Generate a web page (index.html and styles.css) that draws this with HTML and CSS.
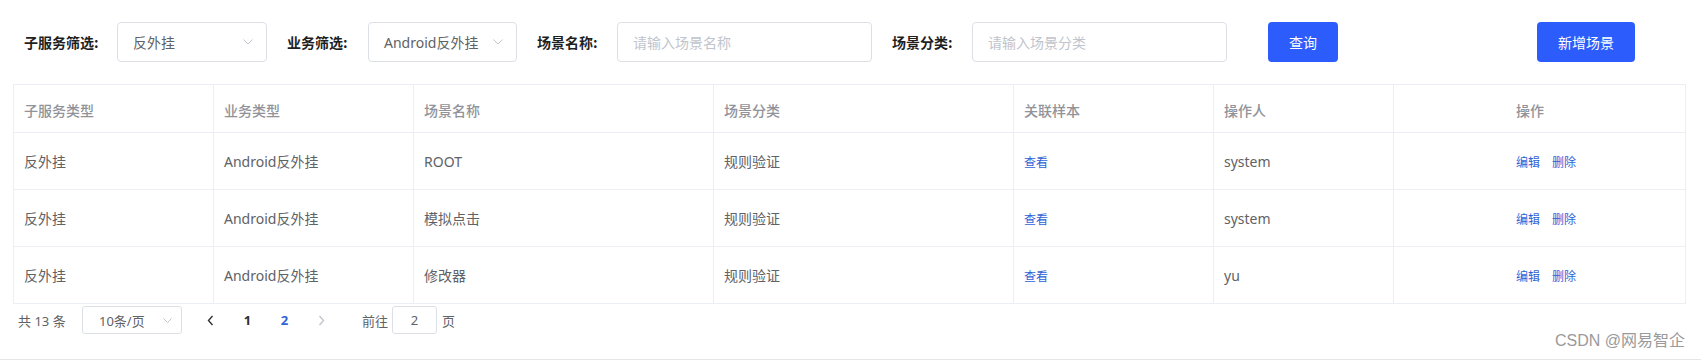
FILE: index.html
```html
<!DOCTYPE html>
<html lang="zh-CN">

<head>
  <meta charset="utf-8">
  <meta name="viewport" content="width=device-width, initial-scale=1">
  <title>场景管理</title>
  <link rel="stylesheet" href="styles.css">
</head>

<body>
  <div class="page">
    <!-- 筛选条件 -->
    <div class="filter">
      <div class="filter-item">
        <label class="filter-label label-sub">子服务筛选:</label>
        <div class="select select-sub">
          <span>反外挂</span>
          <svg class="arrow" width="10" height="6" viewBox="0 0 10 6"><polyline points="0.5,0.5 5,5 9.5,0.5" fill="none" stroke="#c0c4cc" stroke-width="1"/></svg>
        </div>
      </div>
      <div class="filter-item">
        <label class="filter-label label-biz">业务筛选:</label>
        <div class="select select-biz">
          <span>Android反外挂</span>
          <svg class="arrow" width="10" height="6" viewBox="0 0 10 6"><polyline points="0.5,0.5 5,5 9.5,0.5" fill="none" stroke="#c0c4cc" stroke-width="1"/></svg>
        </div>
      </div>
      <div class="filter-item">
        <label class="filter-label">场景名称:</label>
        <input class="input" type="text" placeholder="请输入场景名称">
      </div>
      <div class="filter-item">
        <label class="filter-label">场景分类:</label>
        <input class="input" type="text" placeholder="请输入场景分类">
      </div>
      <button class="btn btn-query">查询</button>
      <button class="btn btn-add">新增场景</button>
    </div>

    <!-- 场景列表 -->
    <table class="table">
      <colgroup>
        <col style="width: 200px">
        <col style="width: 200px">
        <col style="width: 300px">
        <col style="width: 300px">
        <col style="width: 200px">
        <col style="width: 180px">
        <col style="width: 292px">
      </colgroup>
      <thead>
        <tr>
          <th>子服务类型</th>
          <th>业务类型</th>
          <th>场景名称</th>
          <th>场景分类</th>
          <th>关联样本</th>
          <th>操作人</th>
          <th class="col-op">操作</th>
        </tr>
      </thead>
      <tbody>
        <tr>
          <td>反外挂</td>
          <td>Android反外挂</td>
          <td>ROOT</td>
          <td>规则验证</td>
          <td><a class="link" href="javascript:;">查看</a></td>
          <td>system</td>
          <td class="col-op"><a class="link" href="javascript:;">编辑</a><a class="link" href="javascript:;">删除</a></td>
        </tr>
        <tr>
          <td>反外挂</td>
          <td>Android反外挂</td>
          <td>模拟点击</td>
          <td>规则验证</td>
          <td><a class="link" href="javascript:;">查看</a></td>
          <td>system</td>
          <td class="col-op"><a class="link" href="javascript:;">编辑</a><a class="link" href="javascript:;">删除</a></td>
        </tr>
        <tr>
          <td>反外挂</td>
          <td>Android反外挂</td>
          <td>修改器</td>
          <td>规则验证</td>
          <td><a class="link" href="javascript:;">查看</a></td>
          <td>yu</td>
          <td class="col-op"><a class="link" href="javascript:;">编辑</a><a class="link" href="javascript:;">删除</a></td>
        </tr>
      </tbody>
    </table>

    <!-- 分页 -->
    <div class="pager">
      <span class="pager-total">共 13 条</span>
      <div class="pager-size">
        <span>10条/页</span>
        <svg class="arrow" width="9" height="5" viewBox="0 0 9 5"><polyline points="0.5,0.5 4.5,4.5 8.5,0.5" fill="none" stroke="#c0c4cc" stroke-width="1"/></svg>
      </div>
      <ul class="pager-list">
        <li class="pager-btn">
          <svg width="7" height="11" viewBox="0 0 7 11"><polyline points="5.5,1 1.5,5.5 5.5,10" fill="none" stroke="#303133" stroke-width="1.4"/></svg>
        </li>
        <li class="pager-num">1</li>
        <li class="pager-num active">2</li>
        <li class="pager-btn">
          <svg width="7" height="11" viewBox="0 0 7 11"><polyline points="1.5,1 5.5,5.5 1.5,10" fill="none" stroke="#c0c4cc" stroke-width="1.4"/></svg>
        </li>
      </ul>
      <div class="pager-jump">
        <span>前往</span>
        <div class="pager-input">2</div>
        <span>页</span>
      </div>
    </div>

    <div class="watermark">CSDN @网易智企</div>
  </div>
</body>

</html>
```

FILE: styles.css
```css
* {
  padding: 0;
  margin: 0;
  box-sizing: border-box;
}

ul {
  list-style: none;
}

a {
  text-decoration: none;
  color: inherit;
}

body {
  font-family: "Noto Sans", "Noto Sans CJK SC", sans-serif;
  font-size: 14px;
  color: #606266;
  background-color: #fff;
}

.page {
  position: relative;
  height: 360px;
  padding-top: 22px;
  border-bottom: 1px solid #e6e6e6;
}

/* 筛选条件 */
.filter {
  display: flex;
  align-items: center;
  height: 40px;
  padding-left: 24px;
}

.filter-item {
  display: flex;
  align-items: center;
  margin-right: 20px;
}

.filter-label {
  width: 80px;
  font-size: 14px;
  font-weight: 700;
  color: #1f1f1f;
  font-family: "Noto Sans CJK SC", sans-serif;
}

.filter-label.label-sub {
  width: 93px;
}

.filter-label.label-biz {
  width: 81px;
}

.select {
  display: flex;
  align-items: center;
  justify-content: space-between;
  height: 40px;
  padding: 0 13px 0 15px;
  border: 1px solid #dcdfe6;
  border-radius: 4px;
  color: #606266;
}

.select-sub {
  width: 150px;
}

.select-biz {
  width: 149px;
}

.input {
  width: 255px;
  height: 40px;
  padding: 0 15px;
  border: 1px solid #dcdfe6;
  border-radius: 4px;
  font-family: inherit;
  font-size: 14px;
  color: #606266;
  outline: none;
}

.input::placeholder {
  color: #c0c4cc;
  font-family: "Noto Sans CJK SC", sans-serif;
}

.btn {
  height: 40px;
  border: 0;
  border-radius: 4px;
  background-color: #2c5cfb;
  color: #fff;
  font-family: "Noto Sans CJK SC", sans-serif;
  font-size: 14px;
  cursor: pointer;
}

.btn-query {
  width: 70px;
  margin-left: 21px;
}

.btn-add {
  width: 98px;
  margin-left: 199px;
}

/* 场景列表 */
.table {
  width: 1672px;
  margin: 22px 0 0 13px;
  border-collapse: collapse;
  table-layout: fixed;
}

.table th,
.table td {
  border: 1px solid #ebeef5;
  padding: 0 10px;
  text-align: left;
  vertical-align: middle;
}

.table th {
  height: 48px;
  padding-top: 2px;
  font-weight: 500;
  color: #909399;
  font-family: "Noto Sans CJK SC", sans-serif;
}

.table td {
  height: 57px;
  color: #606266;
}

.table .col-op {
  padding-left: 122px;
}

.link {
  font-size: 12px;
  color: #3062d6;
  font-family: "Noto Sans CJK SC", sans-serif;
}

.col-op .link + .link {
  margin-left: 12px;
}

/* 分页 */
.pager {
  display: flex;
  align-items: center;
  height: 28px;
  margin-top: 2px;
  padding-left: 18px;
  font-size: 13px;
  color: #606266;
}

.pager-total {
  width: 64px;
}

.pager-size {
  display: flex;
  align-items: center;
  justify-content: space-between;
  width: 100px;
  height: 28px;
  padding: 0 9px 0 16px;
  border: 1px solid #dcdfe6;
  border-radius: 3px;
}

.pager-list {
  display: flex;
  margin-left: 10px;
}

.pager-list li {
  display: flex;
  align-items: center;
  justify-content: center;
  width: 37px;
  height: 28px;
  font-weight: 700;
  color: #303133;
}

.pager-list .active {
  color: #3062d6;
}

.pager-jump {
  display: flex;
  align-items: center;
  margin-left: 22px;
}

.pager-input {
  width: 45px;
  height: 28px;
  margin: 0 5px 0 4px;
  line-height: 26px;
  text-align: center;
  border: 1px solid #dcdfe6;
  border-radius: 3px;
}

.watermark {
  position: absolute;
  top: 330px;
  right: 16px;
  font-family: "Liberation Sans", "Noto Sans CJK SC", sans-serif;
  font-size: 16px;
  line-height: 22px;
  color: #9a9a9a;
}
```
